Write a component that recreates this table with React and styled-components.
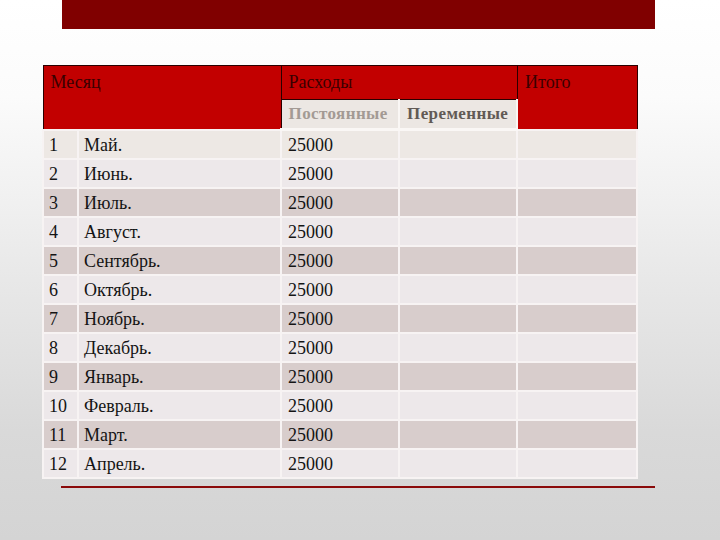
import React from 'react'
import styled, { createGlobalStyle } from 'styled-components'

const Global = createGlobalStyle`
  html, body { margin: 0; padding: 0; }
  body {
    width: 720px;
    height: 540px;
    overflow: hidden;
    font-family: "Liberation Serif", "Times New Roman", serif;
    background: linear-gradient(180deg, #ffffff 0%, #fbfbfb 18%, #e9e9e9 50%, #d9d9d9 80%, #d4d4d4 100%);
  }
`

const Slide = styled.div`
  width: 720px;
  height: 540px;
  display: flex;
  flex-direction: column;
`

const TitleBar = styled.div`
  margin-left: 62px;
  width: 593px;
  height: 29px;
  background: #800000;
`

const Table = styled.table`
  margin: 36px 0 0 42px;
  width: 594px;
  border-collapse: collapse;
  table-layout: fixed;
  font-size: 18px;
`

const HeadCell = styled.th`
  background: #c20000;
  border: 1px solid #2a0000;
  color: #3a0000;
  font-weight: normal;
  font-size: 18px;
  text-align: left;
  vertical-align: top;
  padding: 6px 0 0 7px;
`

const SubCell = styled.th`
  background: #ece7e3;
  border-bottom: 3px solid #faf7f5;
  border-right: 2px solid #faf7f5;
  color: ${p => p.$tone};
  font-weight: bold;
  font-size: 17px;
  letter-spacing: 0.4px;
  text-align: left;
  padding: 0 0 0 7px;
  height: 28px;
  white-space: nowrap;
`

const Row = styled.tr`
  height: 29px;
  background: ${p => p.$bg};
`

const Cell = styled.td`
  border: 2px solid #f7f3f3;
  color: #141414;
  padding: 2px 0 0 ${p => p.$pad || 5}px;
  white-space: nowrap;
`

const BottomLine = styled.div`
  margin: 7px 0 0 61px;
  width: 594px;
  height: 2px;
  background: #8a0a0a;
`

const months = ['Май.', 'Июнь.', 'Июль.', 'Август.', 'Сентябрь.', 'Октябрь.', 'Ноябрь.', 'Декабрь.', 'Январь.', 'Февраль.', 'Март.', 'Апрель.']

const rowBg = (i) => {
  if (i === 0) return '#ede8e4'
  return i % 2 === 0 ? '#d8cdcc' : '#ede8ea'
}

export default function App() {
  return (
    <Slide>
      <Global />
      <TitleBar />
      <Table>
        <colgroup>
          <col style={{ width: 35 }} />
          <col style={{ width: 203 }} />
          <col style={{ width: 118 }} />
          <col style={{ width: 118 }} />
          <col style={{ width: 120 }} />
        </colgroup>
        <thead>
          <tr style={{ height: 34 }}>
            <HeadCell colSpan={2} rowSpan={2}>Месяц</HeadCell>
            <HeadCell colSpan={2}>Расходы</HeadCell>
            <HeadCell rowSpan={2}>Итого</HeadCell>
          </tr>
          <tr>
            <SubCell $tone="#a39a94">Постоянные</SubCell>
            <SubCell $tone="#625a55">Переменные</SubCell>
          </tr>
        </thead>
        <tbody>
          {months.map((m, i) => (
            <Row key={m} $bg={rowBg(i)}>
              <Cell $pad={5}>{i + 1}</Cell>
              <Cell>{m}</Cell>
              <Cell $pad={6}>25000</Cell>
              <Cell />
              <Cell />
            </Row>
          ))}
        </tbody>
      </Table>
      <BottomLine />
    </Slide>
  )
}
